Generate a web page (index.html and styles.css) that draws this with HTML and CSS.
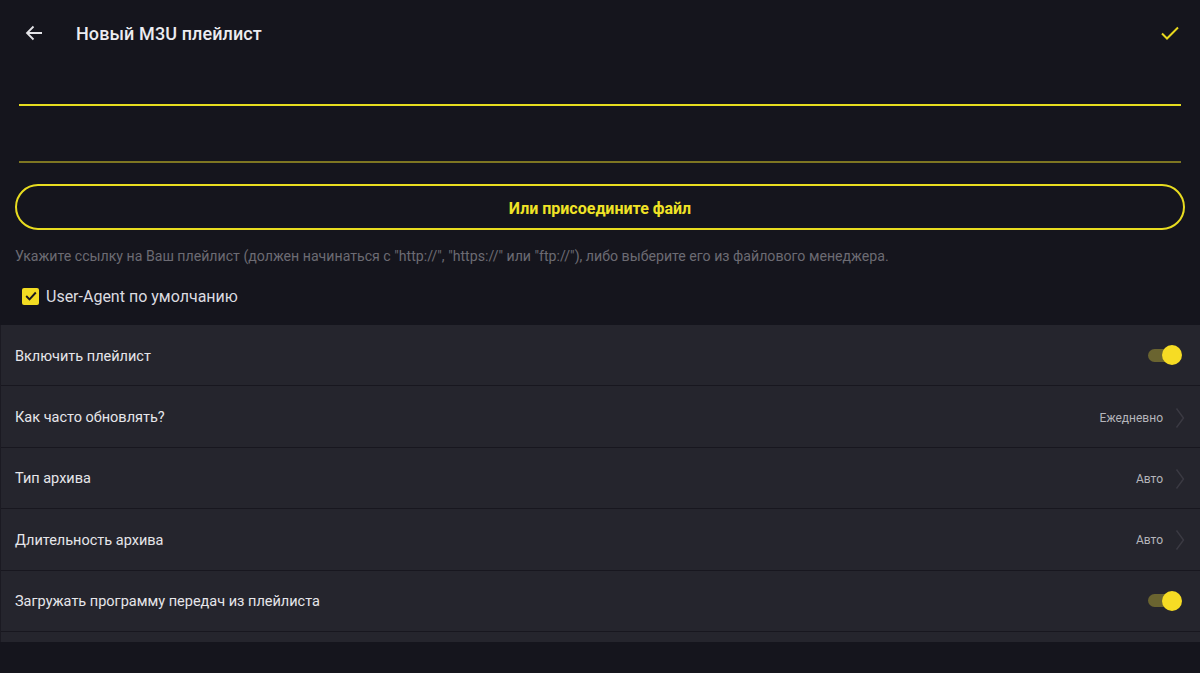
FILE: index.html
```html
<!DOCTYPE html>
<html lang="ru">
<head>
<meta charset="utf-8">
<link rel="stylesheet" href="styles.css">
</head>
<body>
<div class="app">
  <header class="topbar">
    <span class="back">
      <svg width="18" height="16" viewBox="0 0 18 16"><path d="M17 8H2M8.5 1.5L2 8l6.5 6.5" fill="none" stroke="#e4e4e8" stroke-width="1.8"/></svg>
    </span>
    <h1 class="title">Новый M3U плейлист</h1>
    <span class="ok">
      <svg width="20" height="16" viewBox="0 0 20 16"><path d="M2 8.5l5 5L18 2.5" fill="none" stroke="#e8d81e" stroke-width="2"/></svg>
    </span>
  </header>

  <div class="fields">
    <div class="field field-active"></div>
    <div class="field field-idle"></div>
  </div>

  <button class="attach">Или присоедините файл</button>

  <p class="hint">Укажите ссылку на Ваш плейлист (должен начинаться с "http://", "https://" или "ftp://"), либо выберите его из файлового менеджера.</p>

  <label class="check">
    <span class="box">
      <svg width="12" height="10" viewBox="0 0 12 10"><path d="M1.2 5l3.3 3.3L10.8 1.5" fill="none" stroke="#1a1920" stroke-width="1.9"/></svg>
    </span>
    <span class="check-label">User-Agent по умолчанию</span>
  </label>

  <div class="list">
    <div class="row">
      <span class="row-label">Включить плейлист</span>
      <span class="switch"><span class="track"></span><span class="thumb"></span></span>
    </div>
    <div class="row">
      <span class="row-label">Как часто обновлять?</span>
      <span class="row-value">Ежедневно</span>
      <svg class="chev" width="10" height="22" viewBox="0 0 10 22"><path d="M1.5 1.5L8.5 11l-7 9.5" fill="none" stroke="#3b3a43" stroke-width="1.4"/></svg>
    </div>
    <div class="row">
      <span class="row-label">Тип архива</span>
      <span class="row-value">Авто</span>
      <svg class="chev" width="10" height="22" viewBox="0 0 10 22"><path d="M1.5 1.5L8.5 11l-7 9.5" fill="none" stroke="#3b3a43" stroke-width="1.4"/></svg>
    </div>
    <div class="row">
      <span class="row-label">Длительность архива</span>
      <span class="row-value">Авто</span>
      <svg class="chev" width="10" height="22" viewBox="0 0 10 22"><path d="M1.5 1.5L8.5 11l-7 9.5" fill="none" stroke="#3b3a43" stroke-width="1.4"/></svg>
    </div>
    <div class="row">
      <span class="row-label">Загружать программу передач из плейлиста</span>
      <span class="switch"><span class="track"></span><span class="thumb"></span></span>
    </div>
    <div class="row row-peek"></div>
  </div>
</div>
</body>
</html>
```

FILE: styles.css
```css
* { box-sizing: border-box; }
html, body {
  margin: 0;
  padding: 0;
  background: #15151d;
  height: 100%;
  overflow: hidden;
}
body {
  font-family: Roboto, "Noto Sans", "Liberation Sans", sans-serif;
  color: #e2e2e6;
}
.app {
  width: 1200px;
  height: 673px;
  display: flex;
  flex-direction: column;
}
.topbar {
  height: 66px;
  display: flex;
  align-items: center;
  padding: 0 20px 0 25px;
}
.back {
  width: 18px;
  height: 16px;
  display: flex;
}
.title {
  margin: 0 0 0 33px;
  font-size: 18px;
  font-weight: 500;
  color: #ececf0;
  letter-spacing: 0.1px;
  flex: 1;
}
.ok {
  display: flex;
  width: 20px;
  height: 16px;
}
.fields {
  padding: 38px 19px 0 19px;
  display: flex;
  flex-direction: column;
}
.field-active {
  height: 2px;
  background: #e5dc1f;
}
.field-idle {
  margin-top: 55px;
  height: 2px;
  background: #7e7622;
}
.attach {
  margin: 21px 15px 0 15px;
  height: 46px;
  border: 2px solid #e8dc20;
  border-radius: 23px;
  background: transparent;
  color: #f0e326;
  font-family: Roboto, "Noto Sans", "Liberation Sans", sans-serif;
  font-size: 16px;
  font-weight: 700;
  padding: 2px 0 0 0;
}
.hint {
  margin: 17px 15px 0 15px;
  font-size: 14.15px;
  color: #6c6b73;
  line-height: 18px;
}
.check {
  display: flex;
  align-items: center;
  margin: 22px 0 0 22px;
  height: 18px;
}
.box {
  width: 17px;
  height: 17px;
  border-radius: 2px;
  background: #f2dc22;
  display: flex;
  align-items: center;
  justify-content: center;
}
.check-label {
  margin-left: 7px;
  font-size: 16px;
  color: #dcdce0;
}
.list {
  margin-top: 20px;
  display: flex;
  flex-direction: column;
  border-left: 1px solid #1b1a22;
}
.row {
  height: 61.4px;
  background: #25252d;
  border-bottom: 1px solid #18171f;
  display: flex;
  align-items: center;
  padding: 2px 18px 0 14px;
}
.row-label {
  flex: 1;
  font-size: 14.5px;
  color: #e6e6ea;
}
.row-value {
  font-size: 12px;
  color: #b5b5bb;
  margin-right: 12px;
}
.chev {
  margin-right: -3px;
}
.switch {
  position: relative;
  width: 34px;
  height: 20px;
  margin-top: -2px;
  display: flex;
  align-items: center;
}
.track {
  width: 32px;
  height: 13px;
  border-radius: 7px;
  background: #6a6430;
}
.thumb {
  position: absolute;
  right: 0;
  top: 0;
  width: 20px;
  height: 20px;
  border-radius: 50%;
  background: #f6dc24;
}
.row-peek {
  height: 10px;
  border-bottom: none;
}
```
